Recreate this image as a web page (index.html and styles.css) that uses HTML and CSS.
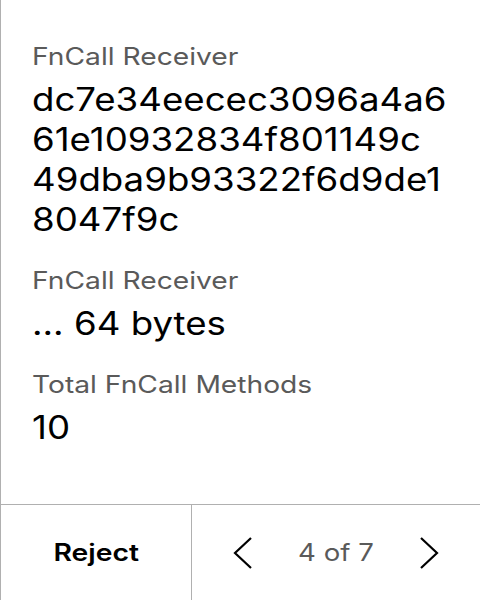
FILE: index.html
```html
<!DOCTYPE html>
<html>
<head>
<meta charset="utf-8">
<link rel="stylesheet" href="styles.css">
</head>
<body>
<div class="screen">
  <main class="content">
    <div class="field">
      <div class="label">FnCall Receiver</div>
      <div class="value">dc7e34eecec3096a4a6<br>61e10932834f801149c<br>49dba9b93322f6d9de1<br>8047f9c</div>
    </div>
    <div class="field">
      <div class="label">FnCall Receiver</div>
      <div class="value">... 64 bytes</div>
    </div>
    <div class="field">
      <div class="label">Total FnCall Methods</div>
      <div class="value">10</div>
    </div>
  </main>
  <footer class="footer">
    <div class="reject"><span class="reject-text">Reject</span></div>
    <div class="pager">
      <svg class="chev" width="32" height="32" viewBox="0 0 32 32"><polyline points="24,1 8,16 24,31" fill="none" stroke="#000" stroke-width="2.2"/></svg>
      <span class="count">4 of 7</span>
      <svg class="chev" width="32" height="32" viewBox="0 0 32 32"><polyline points="8,1 24,16 8,31" fill="none" stroke="#000" stroke-width="2.2"/></svg>
    </div>
  </footer>
</div>
</body>
</html>
```

FILE: styles.css
```css
* { box-sizing: border-box; }
html, body { margin: 0; padding: 0; background: #fff; overflow: hidden; }
body { font-family: Inter, "Noto Sans", sans-serif; color: #000; }
.screen {
  width: 480px;
  height: 600px;
  border-left: 1px solid #b0b0b0;
  display: flex;
  flex-direction: column;
}
.content {
  flex: 1;
  padding: 41px 0 0 31px;
  display: flex;
  flex-direction: column;
  align-items: flex-start;
  gap: 25px;
}
.field {
  display: flex;
  flex-direction: column;
  align-items: flex-start;
  gap: 7px;
}
.label {
  width: fit-content;
  font-size: 24px;
  line-height: 32px;
  color: #5a5a5a;
  transform: scaleX(1.175);
  transform-origin: left center;
}
.value {
  width: fit-content;
  white-space: nowrap;
  font-size: 32px;
  line-height: 40px;
  color: #000;
  transform: scaleX(1.145);
  transform-origin: left center;
}
.footer {
  height: 96px;
  border-top: 1px solid #b0b0b0;
  display: flex;
}
.reject {
  width: 191px;
  border-right: 1px solid #b0b0b0;
  display: flex;
  align-items: center;
  justify-content: center;
}
.reject-text {
  display: inline-block;
  font-size: 24px;
  font-weight: 600;
  transform: scaleX(1.18);
}
.pager {
  flex: 1;
  display: flex;
  align-items: center;
  justify-content: center;
  gap: 44px;
}
.count {
  display: inline-block;
  font-size: 24px;
  color: #5a5a5a;
  transform: scaleX(1.15);
}
.chev { display: block; }
```
